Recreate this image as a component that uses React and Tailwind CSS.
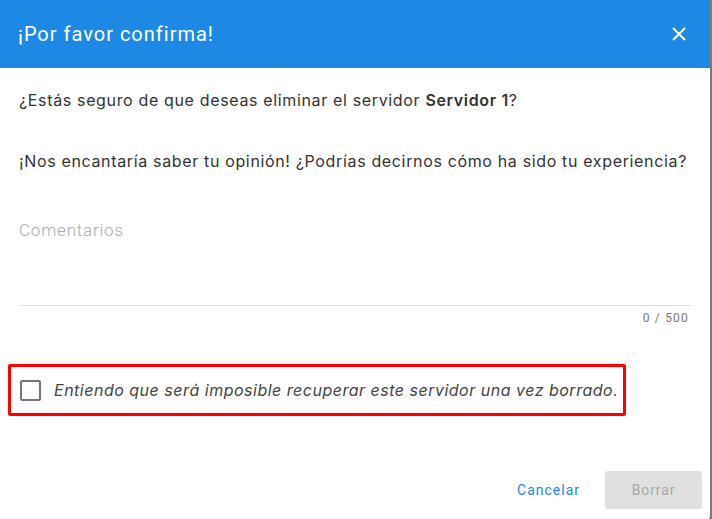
import React, { useState } from 'react';

const App = () => {
  const [comment, setComment] = useState('');
  const [agreed, setAgreed] = useState(false);

  return (
    <div className="w-[712px] h-[519px] bg-[#7a7a7a] flex overflow-hidden">
      <div className="w-[710px] h-[519px] bg-white flex flex-col rounded-br-[3px]">
        {/* Header */}
        <div className="h-[68px] bg-[#1e88e5] flex items-center justify-between pl-[18px] pr-[24px] shrink-0">
          <h2 className="text-white text-[20px] font-['Roboto',sans-serif] font-normal tracking-[1px]">
            ¡Por favor confirma!
          </h2>
          <button className="text-white">
            <svg width="14" height="14" viewBox="0 0 14 14" fill="none" stroke="white" strokeWidth="2">
              <path d="M1 1 L13 13 M13 1 L1 13" />
            </svg>
          </button>
        </div>

        {/* Body */}
        <div className="flex flex-col px-[19px] pt-[20px] font-['Inter',sans-serif] text-[16px] text-[#333] tracking-[0.65px]">
          <p className="leading-[24px]">
            ¿Estás seguro de que deseas eliminar el servidor <strong className="font-semibold">Servidor 1</strong>?
          </p>
          <p className="leading-[24px] mt-[37px]">
            ¡Nos encantaría saber tu opinión! ¿Podrías decirnos cómo ha sido tu experiencia?
          </p>

          <div className="mt-[45px] border-b border-[#ddd]">
            <textarea
              value={comment}
              onChange={e => setComment(e.target.value)}
              placeholder="Comentarios"
              className="w-full h-[87px] resize-none outline-none font-['Roboto',sans-serif] font-light text-[17px] tracking-[0.8px] text-[#333] placeholder:text-[#aaa] block"
            />
          </div>
          <div className="flex justify-end mt-[4px] pr-[2px] font-['Roboto',sans-serif] text-[12px] tracking-[1.2px] text-[#777] leading-[16px]">
            {comment.length} / 500
          </div>
        </div>

        {/* Confirm checkbox */}
        <div className="mt-[38px] ml-[8px] w-[618px] h-[52px] border-[3px] border-[#ff0000] rounded-[2px] flex items-center pl-[9px]">
          <label className="flex items-center gap-[13px] cursor-pointer">
            <span
              onClick={() => setAgreed(!agreed)}
              className="w-[21px] h-[21px] border-2 border-[#777] rounded-[2px] bg-white block"
            />
            <span className="font-['Inter',sans-serif] italic text-[16px] tracking-[0.5px] text-[#444]">
              Entiendo que será imposible recuperar este servidor una vez borrado.
            </span>
          </label>
        </div>

        {/* Footer */}
        <div className="flex-1 flex items-end justify-end pb-[10px] pr-[8px] gap-[25px] font-['Roboto',sans-serif] text-[14px]">
          <button className="text-[#1e88e5] h-[38px] tracking-[1px]">Cancelar</button>
          <button disabled={!agreed} className="w-[97px] h-[38px] bg-[#e0e0e0] text-[#a8a8a8] rounded-[3px] tracking-[0.9px]">
            Borrar
          </button>
        </div>
      </div>
    </div>
  );
};

export default App;
